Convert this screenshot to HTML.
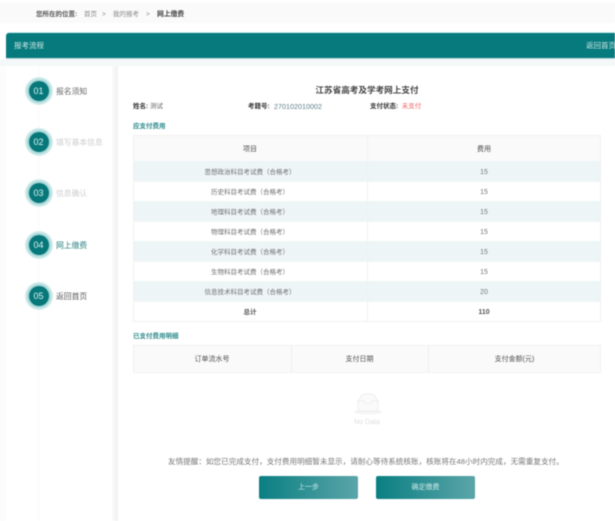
<!DOCTYPE html>
<html lang="zh">
<head>
<meta charset="utf-8">
<style>
html,body{margin:0;padding:0;width:615px;height:521px;overflow:hidden;background:#fff}
#p{position:relative;width:615px;height:521px;overflow:hidden;background:#fff;font-family:"Liberation Sans","Noto Sans CJK SC",sans-serif;filter:blur(.65px);color:#555}
#p div{position:absolute;white-space:nowrap}
.c{text-align:center}
.st{width:20px;height:20px;border-radius:50%;background:#07787a;box-shadow:0 0 0 2px #a9d8d8,0 0 0 4px #cfeaea;left:28.5px;color:#dff2f2;font-size:9px;line-height:20px;text-align:center}
.sl{left:56px;font-size:7.8px;line-height:12px}
.r{left:133px;width:468px;height:21px}
.t{background:#eef5f6}
.n{left:133px;width:234px;text-align:center;font-size:6.5px;line-height:20px;color:#6f6f6f}
.v{left:367px;width:234px;text-align:center;font-size:7px;line-height:20px;color:#777}
.h{font-size:7px;color:#4f4f4f;text-align:center;line-height:26px}
</style>
</head>
<body>
<div id="p">
  <div style="left:0;top:3px;width:615px;height:20px;background:#fafafa"></div>
  <div style="left:36px;top:10px;font-size:6.5px;line-height:10px;font-weight:bold;color:#555">您所在的位置:</div>
  <div style="left:84px;top:10px;font-size:6.5px;line-height:10px;color:#888">首页</div>
  <div style="left:102px;top:10px;font-size:6.5px;line-height:10px;color:#888">&gt;</div>
  <div style="left:113px;top:10px;font-size:6.5px;line-height:10px;color:#888">我的报考</div>
  <div style="left:146px;top:10px;font-size:6.5px;line-height:10px;color:#888">&gt;</div>
  <div style="left:157px;top:10px;font-size:6.8px;line-height:10px;font-weight:bold;color:#444">网上缴费</div>

  <div style="left:6px;top:33px;width:609px;height:25px;background:#067a7c;border-radius:3px 0 0 0;box-shadow:0 -1px 0 #c9eeee,0 1px 0 #bfdcdc"></div>
  <div style="left:14px;top:41px;font-size:7.5px;line-height:10px;color:#cfe9e9">报考流程</div>
  <div style="left:586px;top:41px;font-size:7.5px;line-height:10px;color:#cfe9e9">返回首页</div>

  <div style="left:0;top:59px;width:615px;height:7px;background:#f5f8f9"></div>
  <div style="left:6px;top:66px;width:106px;height:455px;background:#fff"></div>
  <div style="left:112px;top:66px;width:6px;height:455px;background:linear-gradient(90deg,#fbfbfb,#f0f1f2)"></div>
  <div style="left:0;top:66px;width:6px;height:455px;background:#fcfcfc"></div>

  <div style="left:38px;top:66px;width:1px;height:455px;background:#f8f9f9"></div>
  <div class="st" style="top:81px">01</div>
  <div class="sl" style="top:86px;color:#666">报名须知</div>
  <div class="st" style="top:132px">02</div>
  <div class="sl" style="top:137px;color:#cdcdcd">填写基本信息</div>
  <div class="st" style="top:183px">03</div>
  <div class="sl" style="top:188px;color:#cdcdcd">信息确认</div>
  <div class="st" style="top:235px">04</div>
  <div class="sl" style="top:240px;color:#2f8284">网上缴费</div>
  <div class="st" style="top:286px">05</div>
  <div class="sl" style="top:291px;color:#555">返回首页</div>

  <div style="left:118px;top:66px;width:492px;height:455px;background:#fff;border-radius:8px 8px 0 0"></div>

  <div class="c" style="left:133px;width:468px;top:84px;font-size:8.6px;line-height:12px;font-weight:bold;color:#444">江苏省高考及学考网上支付</div>

  <div style="left:133px;top:102px;font-size:6.5px;line-height:10px;color:#666"><b style="color:#333">姓名:</b> 测试</div>
  <div style="left:248px;top:102px;font-size:6.5px;line-height:10px;font-weight:bold;color:#333">考籍号:</div>
  <div style="left:274px;top:102px;font-size:7.2px;line-height:10px;color:#5f7f8c">270102010002</div>
  <div style="left:370px;top:102px;font-size:6.5px;line-height:10px;color:#e66"><b style="color:#333">支付状态:</b>&nbsp; 未支付</div>

  <div style="left:133px;top:122px;font-size:6.5px;line-height:10px;font-weight:bold;color:#2f8b8d">应支付费用</div>

  <div style="left:133px;top:135px;width:468px;height:26px;background:#fafafa"></div>
  <div class="h" style="left:133px;width:234px;top:137px">项目</div>
  <div class="h" style="left:367px;width:234px;top:137px">费用</div>

  <div class="r t" style="top:161px"></div>
  <div class="r t" style="top:201px"></div>
  <div class="r t" style="top:241px"></div>
  <div class="r t" style="top:281px"></div>

  <div class="n" style="top:163px">思想政治科目考试费（合格考）</div><div class="v" style="top:163px">15</div>
  <div class="n" style="top:183px">历史科目考试费（合格考）</div><div class="v" style="top:183px">15</div>
  <div class="n" style="top:203px">地理科目考试费（合格考）</div><div class="v" style="top:203px">15</div>
  <div class="n" style="top:223px">物理科目考试费（合格考）</div><div class="v" style="top:223px">15</div>
  <div class="n" style="top:243px">化学科目考试费（合格考）</div><div class="v" style="top:243px">15</div>
  <div class="n" style="top:263px">生物科目考试费（合格考）</div><div class="v" style="top:263px">15</div>
  <div class="n" style="top:283px">信息技术科目考试费（合格考）</div><div class="v" style="top:283px">20</div>
  <div class="n" style="top:303px;font-weight:bold;color:#555">总计</div><div class="v" style="top:303px;font-weight:bold;color:#555">110</div>

  <div style="left:133px;top:135px;width:466px;height:185px;border:1px solid #f0f1f1"></div>
  <div style="left:367px;top:135px;width:1px;height:186px;background:#f0f1f1"></div>

  <div style="left:133px;top:332px;font-size:6.5px;line-height:10px;font-weight:bold;color:#2f8b8d">已支付费用明细</div>

  <div style="left:133px;top:345px;width:466px;height:26px;background:#fafafa;border:1px solid #f1f1f1"></div>
  <div style="left:291px;top:345px;width:1px;height:27px;background:#eeeeee"></div>
  <div style="left:428px;top:345px;width:1px;height:27px;background:#eeeeee"></div>
  <div class="h" style="left:133px;width:158px;top:347px">订单流水号</div>
  <div class="h" style="left:291px;width:137px;top:347px">支付日期</div>
  <div class="h" style="left:428px;width:173px;top:347px">支付金额(元)</div>

  <svg style="position:absolute;left:352px;top:391px" width="32" height="26" viewBox="0 0 32 26">
    <ellipse cx="16" cy="21" rx="14" ry="2.5" fill="#f5f5f5"/>
    <path d="M6 10 L11 3 H21 L26 10 V20 H6 Z" fill="#fafafa" stroke="#efefef" stroke-width="1"/>
    <path d="M6 10 H12 Q13 13 16 13 Q19 13 20 10 H26" fill="none" stroke="#efefef" stroke-width="1"/>
  </svg>
  <div class="c" style="left:337px;width:60px;top:418px;font-size:7px;line-height:10px;color:#dedede">No Data</div>

  <div style="left:168px;top:457px;font-size:7.6px;line-height:10px;color:#777">友情提醒：如您已完成支付，支付费用明细暂未显示，请耐心等待系统核账，核账将在48小时内完成，无需重复支付。</div>

  <div class="c" style="left:259px;top:476px;width:99px;height:23px;border-radius:2px;background:linear-gradient(90deg,#0a7f82,#5ba5a8);color:#cfe9e9;font-size:7px;line-height:24px">上一步</div>
  <div class="c" style="left:376px;top:476px;width:99px;height:23px;border-radius:2px;background:linear-gradient(90deg,#0a7f82,#5ba5a8);color:#cfe9e9;font-size:7px;line-height:24px">确定缴费</div>
</div>
</body>
</html>
